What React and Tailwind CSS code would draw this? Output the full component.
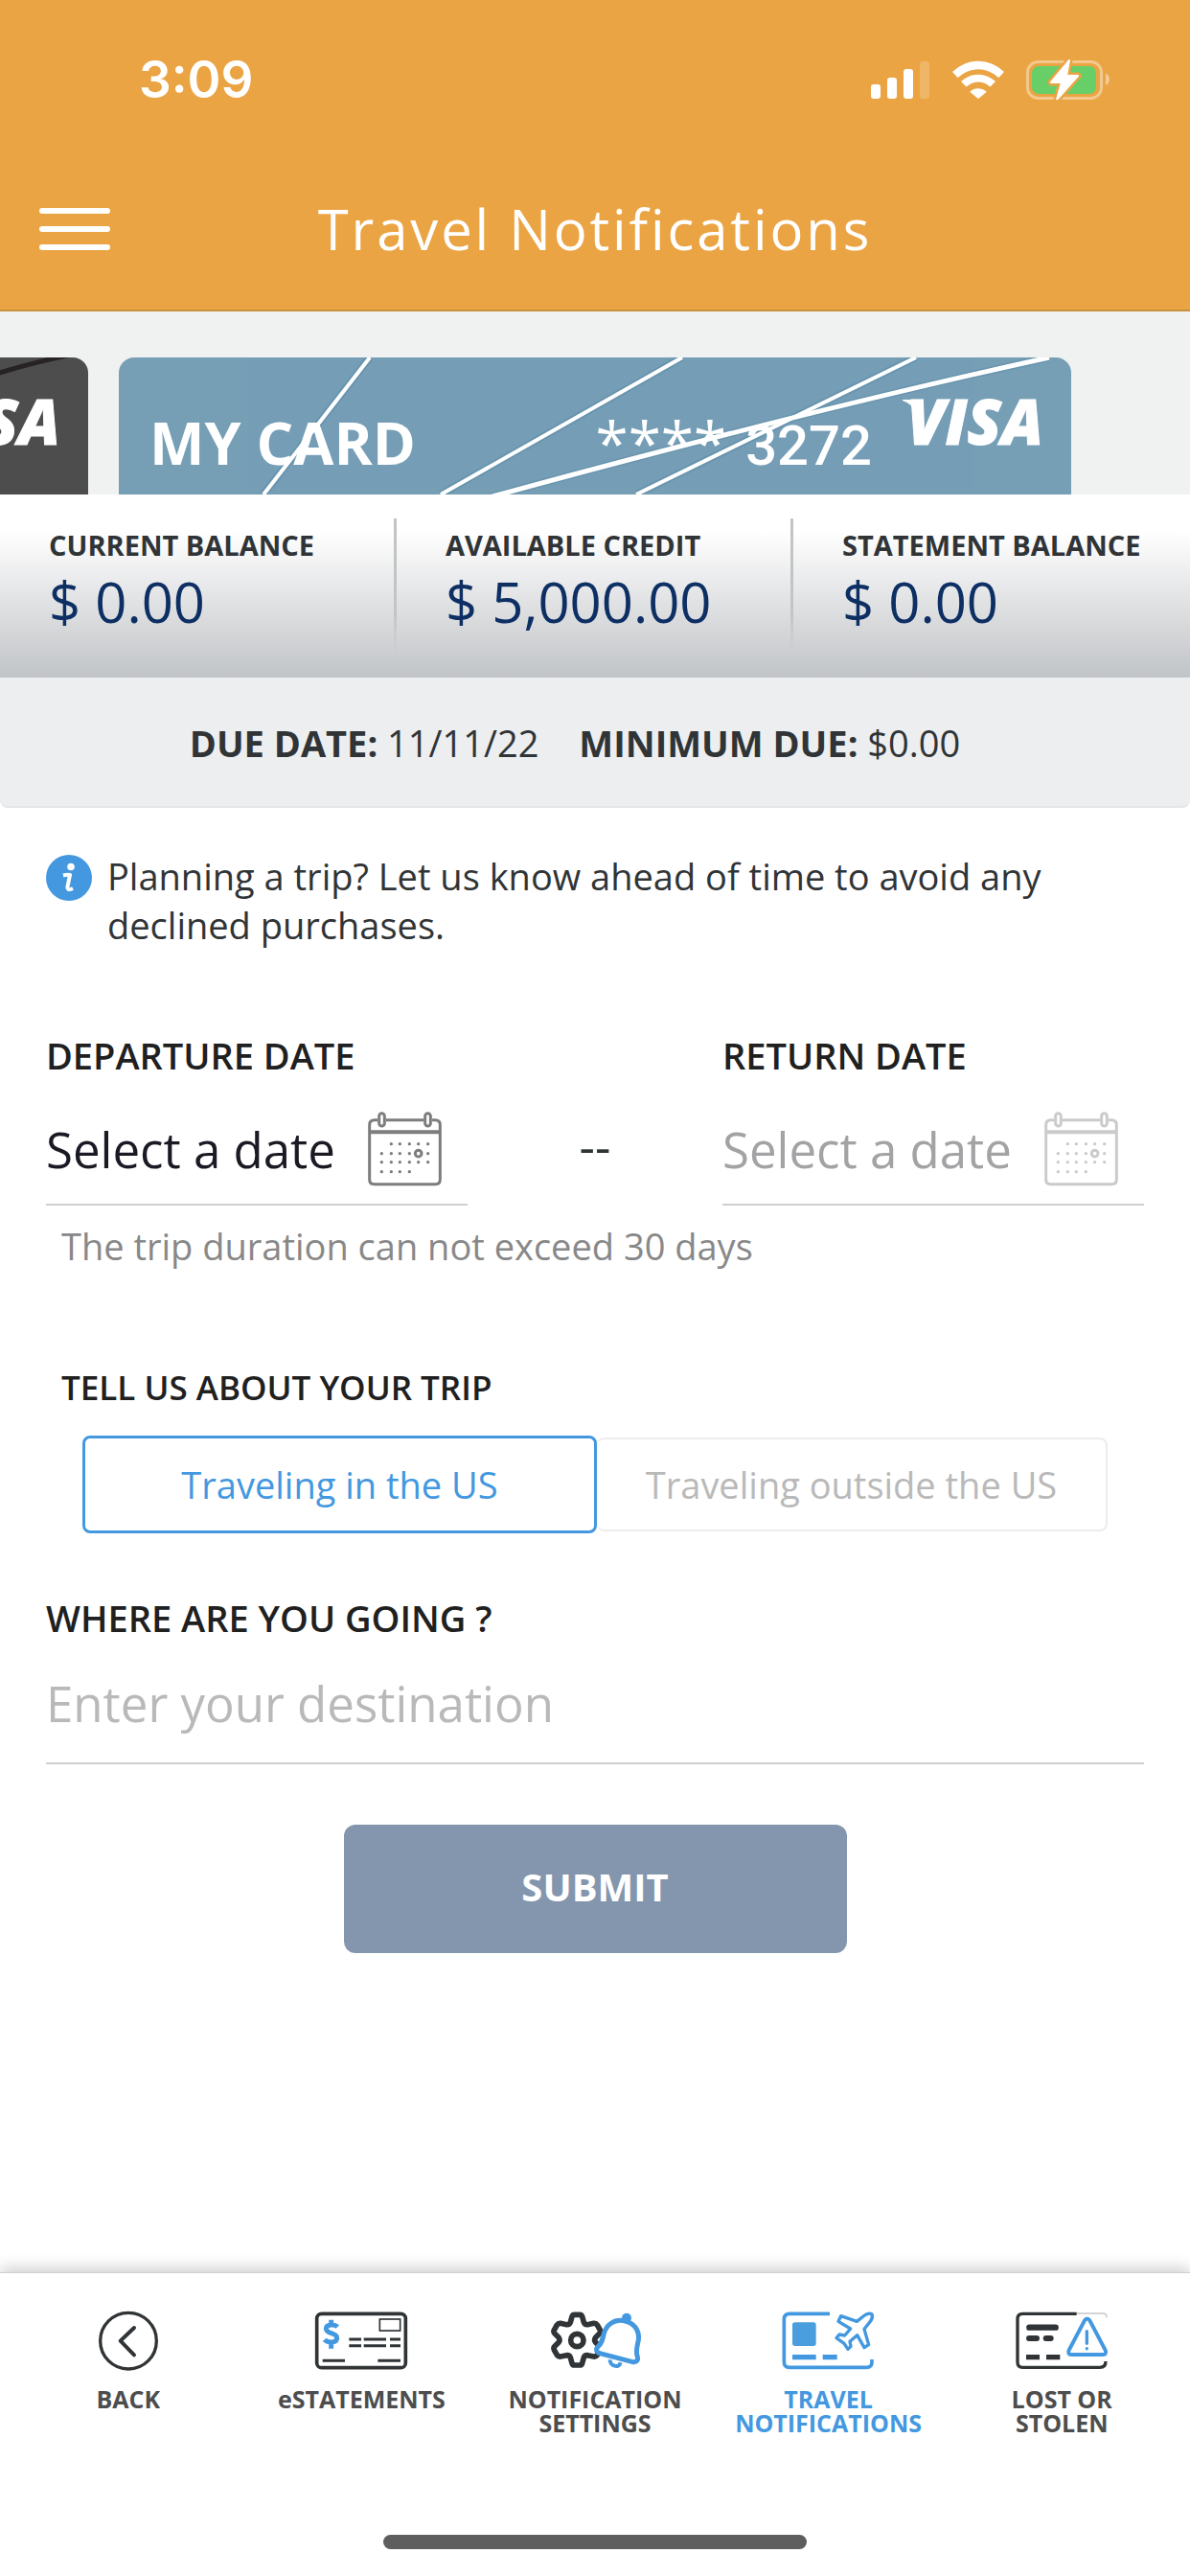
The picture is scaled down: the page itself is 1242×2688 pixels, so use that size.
import React, { useState } from "react";

function StatusIcons() {
  return (
    <svg className="h-[42px] w-[250px]" viewBox="0 0 250 42" aria-hidden="true">
      <g fill="#fff">
        <rect x="0" y="26" width="10" height="15" rx="3" />
        <rect x="17" y="19" width="10" height="22" rx="3" />
        <rect x="34" y="10" width="10" height="31" rx="3" />
        <rect x="51" y="2" width="10" height="39" rx="3" opacity=".2" />
        <path d="M85 13a38 38 0 0 1 54 0l-5 5.500a1 1 0 0 1-1.400 0a30 30 0 0 0-41.200 0a1 1 0 0 1-1.400 0Z" />
        <path d="M94 23a26 26 0 0 1 36 0l-5 5a1 1 0 0 1-1.400 0a17 17 0 0 0-23.200 0a1 1 0 0 1-1.400 0Z" />
        <path d="M104 33a13 13 0 0 1 16 0a1 1 0 0 1 0 1.500l-7.300 6a1 1 0 0 1-1.400 0l-7.300-6a1 1 0 0 1 0-1.500Z" />
      </g>
      <rect x="163.500" y="2.500" width="77" height="38" rx="11" fill="none" stroke="#fff" strokeOpacity=".4" strokeWidth="3" />
      <path d="M245 14.500c5 2 5 10.500 0 12.500Z" fill="#fff" opacity=".45" />
      <rect x="168" y="7" width="67" height="29" rx="7" fill="#68ce67" />
      <path d="M207 1L188 24h11l-5 18l22-25h-12Z" fill="#fff" stroke="#eba443" strokeWidth="7" strokeLinejoin="round" />
      <path d="M207 1L188 24h11l-5 18l22-25h-12Z" fill="#fff" stroke="#fff" strokeWidth="2" strokeLinejoin="round" />
    </svg>
  );
}

function Visa() {
  return (
    <svg className="h-[60px] w-[150px] shrink-0 overflow-visible" viewBox="0 0 150 60" role="img" aria-label="Visa">
      <path d="M2 8H14L18 24Q12 12 2 9Z" fill="#fff" />
      <text x="149" y="55" textAnchor="end" fill="#fff" stroke="#fff" strokeWidth="1" fontFamily="Open Sans, sans-serif" fontSize="65" fontWeight="800" fontStyle="italic">
        VISA
      </text>
    </svg>
  );
}

const DOTS = [
  [145, 187], [172, 187], [202, 187], [230, 187], [260, 187],
  [115, 217], [145, 217], [172, 217], [202, 217], [260, 217],
  [115, 244], [145, 244], [172, 244], [202, 244], [230, 244], [260, 244],
  [115, 274], [145, 274], [172, 274], [202, 274],
];

function CalendarIcon() {
  return (
    <svg className="size-[82px] shrink-0" viewBox="66 80 246 246" fill="none" stroke="currentColor" strokeWidth="9" aria-hidden="true">
      <path d="M102 112H92Q77 112 77 127V298Q77 313 92 313H283Q298 313 298 298V127Q298 112 283 112H273M129 112H246" />
      <path d="M77 150H298" strokeWidth="12" />
      <rect x="107" y="91" width="17" height="40" rx="8.500" />
      <rect x="251" y="91" width="17" height="40" rx="8.500" />
      <circle cx="230" cy="217" r="10" />
      {DOTS.map(([x, y]) => (
        <circle key={x + "-" + y} cx={x} cy={y} r="5" fill="currentColor" stroke="none" />
      ))}
    </svg>
  );
}

function BackIcon() {
  return (
    <svg className="h-20 w-[120px]" viewBox="0 0 360 240" fill="none" stroke="#303436" strokeLinecap="round" strokeLinejoin="round" aria-hidden="true">
      <circle cx="180" cy="128" r="88" strokeWidth="10" />
      <path d="M198 87L155 128L198 172" strokeWidth="12" />
    </svg>
  );
}

function StatementIcon() {
  return (
    <svg className="h-20 w-[120px]" viewBox="0 0 360 240" fill="none" stroke="#303436" aria-hidden="true">
      <rect x="41" y="43" width="278" height="169" rx="15" strokeWidth="11" />
      <rect x="238" y="60" width="64" height="36" strokeWidth="5" />
      <path d="M142 123H180M188 123H258M270 123H303M142 143H180M188 143H258M270 143H303M59 190H129M232 190H303" strokeWidth="9" />
      <path d="M106 84C96 74 70 76 70 90C70 107 104 101 104 119C104 134 76 136 65 124M86 62V76M86 134V152" stroke="#4398e0" strokeWidth="15" />
    </svg>
  );
}

function SettingsIcon() {
  return (
    <svg className="h-20 w-[120px]" viewBox="0 0 360 240" fill="none" strokeLinejoin="round" strokeWidth="17" aria-hidden="true">
      <path stroke="#303436" d="M115 46H133Q138 46 140 52L145 70Q148 78 157 77L176 73Q183 72 187 78L196 94Q199 100 194 105L182 117Q176 125 182 133L194 145Q199 150 196 156L187 172Q183 178 176 177L157 173Q148 172 145 180L140 198Q138 204 133 204H115Q110 204 108 198L103 180Q100 172 91 173L72 177Q65 178 61 172L52 156Q49 150 54 145L66 133Q72 125 66 117L54 105Q49 100 52 94L61 78Q65 72 72 73L91 77Q100 78 103 70L108 52Q110 46 115 46Z" />
      <circle stroke="#303436" cx="124" cy="126" r="20" />
      <path d="M227 187C226 206 255 216 260 196" stroke="#4398e0" strokeWidth="12" />
      <circle cx="279" cy="56" r="15" fill="#4398e0" />
      <path stroke="#4398e0" fill="#fff" d="M270 65C240 59 215 78 208 105C203 126 200 138 190 145C181 153 184 164 195 167L298 194C312 196 316 187 313 177C306 163 312 146 316 125C320 95 302 70 270 65Z" strokeWidth="15" />
    </svg>
  );
}

function TravelIcon() {
  return (
    <svg className="h-20 w-[120px]" viewBox="0 0 360 240" fill="none" stroke="#4398e0" strokeWidth="11" aria-hidden="true">
      <path d="M183 43H57Q40 43 40 60V194Q40 211 57 211H298Q315 211 315 194V186" />
      <path d="M66 179H140M161 179H206" strokeWidth="16" />
      <rect x="66" y="70" width="74" height="74" rx="8" fill="#4b9ede" stroke="none" />
      <path strokeWidth="10" strokeLinejoin="round" d="M268 67L292 48Q305 39 315 44Q319 56 310 67L291 91L305 140L291 149L269 110L246 130L249 145L240 154L228 136L204 119L213 108L230 111L248 90L210 67L218 50Z" />
    </svg>
  );
}

function LostIcon() {
  return (
    <svg className="h-20 w-[120px]" viewBox="0 0 360 240" fill="none" stroke="#303436" aria-hidden="true">
      <path d="M227 42H308Q321 42 322 55" stroke="#c4c6c7" strokeWidth="4" />
      <path d="M227 43H58Q42 43 42 59V195Q42 211 58 211H300Q318 211 318 192" strokeWidth="10" />
      <path d="M79 86H161" strokeWidth="19" strokeLinecap="round" />
      <path d="M78 120H102M131 120H146" strokeWidth="18" strokeLinecap="round" />
      <path d="M69 179H111M132 179H175" strokeWidth="16" />
      <g stroke="#4398e0" strokeLinejoin="round" strokeLinecap="round">
        <path d="M252 64Q260 53 268 64L317 157Q322 170 309 171H211Q198 170 203 157Z" strokeWidth="12" />
        <path d="M259 98V136M259 152V152.500" strokeWidth="10" />
      </g>
    </svg>
  );
}

function Balance({ label, value, divided }) {
  return (
    <div className="relative pt-2 pl-[51px]">
      <dt className="text-[29px] leading-10 font-bold whitespace-nowrap text-[#303436]">{label}</dt>
      <dd className="mt-[3px] text-[58px] leading-[72px] whitespace-nowrap text-[#0d2f63]">{value}</dd>
      {divided && <div className="absolute top-0 right-0 h-[143px] w-[3px] bg-linear-to-b from-[#c2c4c6] via-[#c2c4c6] via-70% to-transparent" />}
    </div>
  );
}

function DateField({ id, label, disabled }) {
  return (
    <div className="w-[440px]">
      <div id={id} className="text-[38px] leading-[52px] font-semibold text-[#202020]">{label}</div>
      <button
        type="button"
        disabled={disabled}
        aria-describedby={id}
        className="mt-[31px] flex w-full items-center gap-8 border-b-2 border-[#cfcfcf] pb-4 text-[51px] leading-20 text-[#1a1a24] disabled:text-[#a3a3a6]"
      >
        <span className="whitespace-nowrap">Select a date</span>
        <span className={disabled ? "text-[#cbcbcb]" : "text-[#7d7d7d]"}>
          <CalendarIcon />
        </span>
      </button>
    </div>
  );
}

const NAV = [
  { label: ["BACK"], Icon: BackIcon },
  { label: ["eSTATEMENTS"], Icon: StatementIcon },
  { label: ["NOTIFICATION", "SETTINGS"], Icon: SettingsIcon },
  { label: ["TRAVEL", "NOTIFICATIONS"], Icon: TravelIcon, active: true },
  { label: ["LOST OR", "STOLEN"], Icon: LostIcon },
];

const REGIONS = ["Traveling in the US", "Traveling outside the US"];

export default function App() {
  const [region, setRegion] = useState(0);
  return (
    <div className="flex min-h-screen flex-col bg-white font-['Open_Sans',sans-serif]">
      <header className="border-b-2 border-[#c9913f] bg-[#eba443] pt-12 pb-[45px] text-white">
        <div className="flex h-[70px] items-center justify-between pr-[83px] pl-[145px]">
          <time className="font-['Inter',sans-serif] text-[53px] leading-[70px] font-semibold">3:09</time>
          <StatusIcons />
        </div>
        <div className="mt-[82px] grid grid-cols-[120px_1fr_120px] items-center">
          <button type="button" aria-label="Menu" className="flex w-[115px] flex-col gap-[13px] pl-[41px]">
            <span className="h-[6px] w-full rounded-full bg-white" />
            <span className="h-[6px] w-full rounded-full bg-white" />
            <span className="h-[6px] w-full rounded-full bg-white" />
          </button>
          <h1 className="text-center text-[58px] leading-[78px] tracking-wider whitespace-nowrap">Travel Notifications</h1>
        </div>
      </header>

      <section aria-label="Cards" className="flex gap-8 bg-[#f0f2f1] pt-12 pr-[124px]">
        <div className="relative flex h-[143px] w-[92px] justify-end overflow-hidden rounded-tr-2xl bg-[#4d4d4d] pt-9 pr-7">
          <svg className="absolute top-0 left-0 h-8 w-[92px]" viewBox="0 0 92 32" aria-hidden="true">
            <path d="M-10 19Q30 6 75 -3" stroke="#272324" strokeWidth="5" fill="none" />
          </svg>
          <Visa />
        </div>
        <div className="relative flex h-[143px] flex-1 items-start overflow-hidden rounded-t-2xl bg-[#769fb6] pr-7 pl-8 text-white">
          <svg className="absolute top-0 left-0 h-[143px] w-full" viewBox="0 0 994 143" fill="none" preserveAspectRatio="none" aria-hidden="true">
            <g stroke="#5f8ea8" strokeWidth="8" opacity=".6">
              <path d="M262 0L151 143M588 0L336 143M832 0L540 143" />
              <path d="M971 0Q720 55 390 145" />
            </g>
            <g stroke="#fff">
              <path d="M262 0L151 143M588 0L336 143M832 0L540 143" strokeWidth="4" />
              <path d="M971 0Q720 55 390 145" strokeWidth="5" />
            </g>
          </svg>
          <div className="relative mt-12 flex flex-1 items-baseline justify-between pr-[30px] leading-20">
            <span className="text-[61px] font-bold">MY CARD</span>
            <span className="text-[62px]">
              ****<span className="ml-5 font-['Roboto',sans-serif] text-[58px] font-medium">3272</span>
            </span>
          </div>
          <div className="relative mt-9">
            <Visa />
          </div>
        </div>
      </section>

      <dl className="grid h-[191px] grid-cols-3 bg-linear-to-b from-white from-20% via-[#e0e1e3] via-60% to-[#c1c4c7] pt-[25px]">
        <Balance label="CURRENT BALANCE" value="$ 0.00" divided />
        <Balance label="AVAILABLE CREDIT" value="$ 5,000.00" divided />
        <Balance label="STATEMENT BALANCE" value="$ 0.00" />
      </dl>

      <div className="flex h-[136px] items-center justify-center rounded-b-lg border-b-2 border-[#e4e6e8] bg-[#eceef0] pt-[2px] text-[38px] text-[#303436]">
        <p className="mr-[42px]"><b>DUE DATE:</b> 11/11/22</p>
        <p className="mr-[42px]"><b>MINIMUM DUE:</b> $0.00</p>
      </div>

      <main className="px-12 pt-[46px]">
        <div className="flex items-start gap-4">
          <svg className="mt-[3px] size-12 shrink-0" viewBox="0 0 48 48" aria-hidden="true">
            <circle cx="24" cy="24" r="24" fill="#4398e0" />
            <circle cx="26" cy="12.500" r="3.800" fill="#fff" />
            <path d="M18 21.500Q24 20 25 21L22.500 33Q22 38 28 35" stroke="#fff" strokeWidth="4" fill="none" />
          </svg>
          <p className="pr-10 text-[38px] leading-[51px] text-[#303436]">
            Planning a trip? Let us know ahead of time to avoid any <br />
            declined purchases.
          </p>
        </div>

        <form onSubmit={(e) => e.preventDefault()}>
          <div className="mt-[84px] flex justify-between">
            <DateField id="departure" label="DEPARTURE DATE" />
            <span className="mt-20 text-[51px] leading-20 text-[#303436]">--</span>
            <DateField id="return" label="RETURN DATE" disabled />
          </div>
          <p className="mt-4 pl-4 text-[38px] leading-[52px] text-[#888888]">The trip duration can not exceed 30 days</p>

          <h2 className="mt-[98px] pl-4 text-[35px] leading-12 font-semibold text-[#202020]">TELL US ABOUT YOUR TRIP</h2>
          <div className="mt-[26px] flex items-center px-[38px] text-[38px]">
            {REGIONS.map((name, i) => (
              <button
                key={name}
                type="button"
                aria-pressed={region === i}
                onClick={() => setRegion(i)}
                className={
                  region === i
                    ? "h-[102px] flex-1 rounded-lg border-3 border-[#4398e0] text-[#4398e0]"
                    : "h-[98px] flex-1 rounded-lg border-y-2 border-r-2 border-[#ececec] text-[#b9b9b9]"
                }
              >
                {name}
              </button>
            ))}
          </div>

          <label htmlFor="destination" className="mt-[62px] block text-[38px] leading-[52px] font-semibold text-[#202020]">
            WHERE ARE YOU GOING ?
          </label>
          <input
            id="destination"
            type="text"
            placeholder="Enter your destination"
            className="mt-[29px] block h-[98px] w-full border-b-2 border-[#cfcfcf] pb-[28px] text-[51px] leading-[68px] text-[#1a1a24] outline-none placeholder:text-[#b9b9b9]"
          />
          <button type="submit" className="mx-auto mt-[63px] block h-[134px] w-[525px] rounded-xl bg-[#8396ae] pb-1 text-[40px] font-bold text-white">
            SUBMIT
          </button>
        </form>
      </main>

      <footer className="mt-auto border-t border-[#cfcfcf] bg-white pt-7 pb-7 shadow-[0_-5px_14px_rgba(0,0,0,0.18)]">
        <nav className="grid h-[236px] grid-cols-5 px-3">
          {NAV.map(({ label, Icon, active }) => (
            <a
              key={label.join(" ")}
              href="#"
              className={
                active
                  ? "flex flex-col items-center text-[25px] leading-[25px] font-bold text-[#4398e0]"
                  : "flex flex-col items-center text-[25px] leading-[25px] font-bold text-[#4d4d4d]"
              }
            >
              <Icon />
              <span className="mt-[11px] text-center">
                {label[0]}
                {label[1] && <br />}
                {label[1]}
              </span>
            </a>
          ))}
        </nav>
        <div className="mx-auto mt-[9px] h-[15px] w-[442px] rounded-full bg-[#5e5e5e]" />
      </footer>
    </div>
  );
}
